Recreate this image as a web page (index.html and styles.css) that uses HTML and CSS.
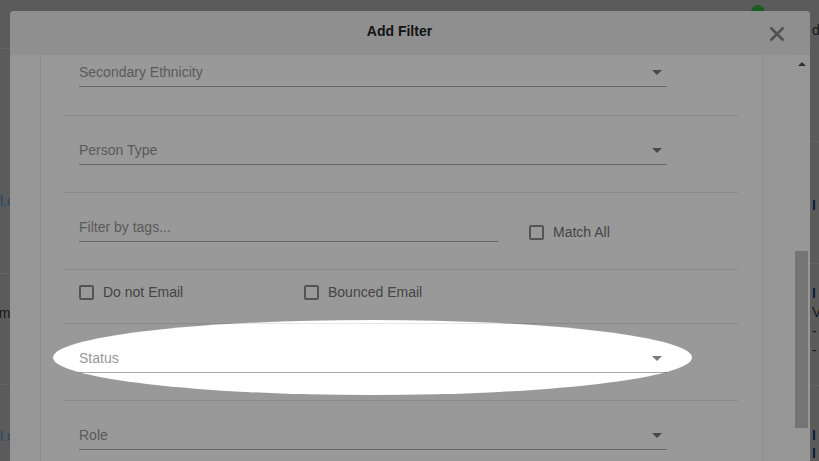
FILE: index.html
```html
<!DOCTYPE html>
<html lang="en">
<head>
<title>Add Filter</title>
<meta charset="UTF-8">
<meta name="viewport" content="width=device-width, initial-scale=1">
<link rel="stylesheet" href="styles.css">
</head>
<body>
<div class="page">
 <div class="list list-left">
  <div class="prow prow-top"></div>
  <div class="prow prow-a"><a class="plink">ail.com</a></div>
  <div class="prow prow-b"><span class="ptext ptext-cut">Tom</span></div>
  <div class="prow prow-c"><a class="plink">ail.com</a></div>
 </div>
 <div class="list list-right">
  <div class="prow prow-r1"><span class="ptext">d</span></div>
  <div class="prow prow-r2"><span class="ptext pbold">I</span></div>
  <div class="prow prow-r3">
   <span class="ptext pbold">I</span>
   <span class="ptext">V</span>
   <span class="ptext">-</span>
   <span class="ptext">-</span>
  </div>
  <div class="prow prow-r4">
   <span class="ptext pbold">I</span>
   <span class="ptext pbold">I</span>
  </div>
 </div>
 <span class="dot"></span>
</div>

<div class="modal">
 <div class="modal-head">
  <div class="modal-title">Add Filter</div>
  <svg class="close" width="16" height="16" viewBox="0 0 16 16">
   <path d="M1.5 1.5 L14.5 14.5 M14.5 1.5 L1.5 14.5" stroke="#878787" stroke-width="2.6" fill="none"/>
  </svg>
 </div>
 <div class="modal-body">
  <div class="card">
   <div class="filters">
    <div class="row row-first">
     <div class="select"><span class="ph">Secondary Ethnicity</span><span class="caret"></span></div>
    </div>
    <div class="row">
     <div class="select"><span class="ph">Person Type</span><span class="caret"></span></div>
    </div>
    <div class="row">
     <div class="select tags"><span class="ph">Filter by tags...</span></div>
     <label class="check check-match"><span class="box"></span>Match All</label>
    </div>
    <div class="row row-checks">
     <label class="check check-wide"><span class="box"></span>Do not Email</label>
     <label class="check"><span class="box"></span>Bounced Email</label>
    </div>
    <div class="row">
     <div class="select"><span class="ph">Status</span><span class="caret"></span></div>
    </div>
    <div class="row">
     <div class="select"><span class="ph">Role</span><span class="caret"></span></div>
    </div>
   </div>
  </div>
  <div class="gutter"></div>
  <div class="scrollbar">
   <span class="arrow-up"></span>
   <span class="thumb"></span>
  </div>
 </div>
</div>

<div class="spotlight"></div>
</body>
</html>
```

FILE: styles.css
```css
html, body { margin: 0; height: 100%; overflow: hidden; }
body { font: 14px "Liberation Sans", Arial, sans-serif; color: #222;
       background-color: #989898; }

/* page behind the modal */
.page { display: flex; justify-content: space-between; height: 100%; }
.list { display: flex; flex-direction: column; }
.list-left { width: 40px; }
.list-right { width: 9px; }
.prow { flex: none; border-bottom: 1px solid #a6a6a6; box-sizing: border-box;
        display: flex; flex-direction: column; white-space: nowrap; }
.prow-top { height: 49px; }
.prow-a { height: 225px; padding-top: 143px; }
.prow-b { height: 111px; padding-top: 30px; }
.prow-c { height: 76px; padding-top: 42px; border-bottom: none; }
.plink { color: #3f76ab; line-height: 18px; margin-left: -11px; }
.ptext { line-height: 18px; color: #2a2a2a; padding-left: 2px; }
.ptext-cut { padding-left: 0; margin-left: -16px; }
.pbold { color: #1b2c6a; font-weight: bold; }
.prow-r1 { height: 142px; padding-top: 21px; }
.prow-r2 { height: 122px; padding-top: 54px; }
.prow-r3 { height: 122px; padding-top: 20px; }
.prow-r3 .ptext { line-height: 19px; }
.prow-r4 { height: 75px; padding-top: 40px; border-bottom: none; }
.dot { position: absolute; left: 751px; top: 5px; width: 14px; height: 14px;
       border-radius: 50%; background: #2f9a42; }

/* modal */
.modal { position: fixed; left: 10px; top: 11px; width: 800px; bottom: 0;
         background: #fbfbfb; border-radius: 4px 4px 0 0;
         display: flex; flex-direction: column; }
.modal-head { height: 44px; flex: none; display: flex; align-items: center;
              padding: 0 25px 0 20px; background: #efefef;
              border-radius: 4px 4px 0 0; }
.modal-title { flex: 1; text-align: center; font-weight: bold; color: #222;
               line-height: 18px; padding-bottom: 4px; }
.close { display: block; margin-top: 1px; }

.modal-body { flex: 1; display: flex; padding-left: 30px; min-height: 0; }
.card { width: 723px; flex: none; box-sizing: border-box; background: #fff;
        border-left: 1px solid #eaeaea; border-right: 1px solid #eaeaea;
        overflow: hidden; }
.gutter { width: 30px; flex: none; }
.scrollbar { width: 17px; flex: none; background: #fcfcfc;
             display: flex; flex-direction: column; align-items: center; }
.arrow-up { margin-top: 7px; width: 0; height: 0; border: 4px solid transparent;
            border-top: none; border-bottom: 4px solid #505050; }
.thumb { margin-top: 185px; width: 13px; height: 177px; background: #c1c1c1; }

.filters { margin: -16px 24px 0 23px; }
.row { display: flex; align-items: center; padding: 25px 0 27px 15px;
       border-bottom: 1px solid #e6e6e6; }
.row-first { padding-top: 24px; padding-bottom: 28px; }
.select { width: 588px; height: 23px; display: flex;
          justify-content: space-between; align-items: flex-start;
          border-bottom: 1px solid #a8a8a8; }
.select.tags { width: 419px; }
.ph { color: #979797; line-height: 18px; }
.caret { margin: 7px 5px 0 0; width: 0; height: 0;
         border-left: 5px solid transparent; border-right: 5px solid transparent;
         border-top: 5px solid #7a7a7a; }

.check { display: flex; align-items: center; gap: 9px; color: #737373;
         line-height: 17px; }
.check-match { margin-left: 31px; margin-top: 4px; }
.check-wide { width: 225px; }
.box { width: 15px; height: 15px; box-sizing: border-box; border: 2px solid #8c8c8c;
       border-radius: 2px; }
.row-checks { padding-top: 14px; padding-bottom: 22px; }

/* tour highlight */
.spotlight { position: fixed; left: 53px; top: 320px; width: 639px; height: 75px;
             border-radius: 50%; box-shadow: 0 0 0 2000px rgba(0,0,0,0.4);
             pointer-events: none; }
```
